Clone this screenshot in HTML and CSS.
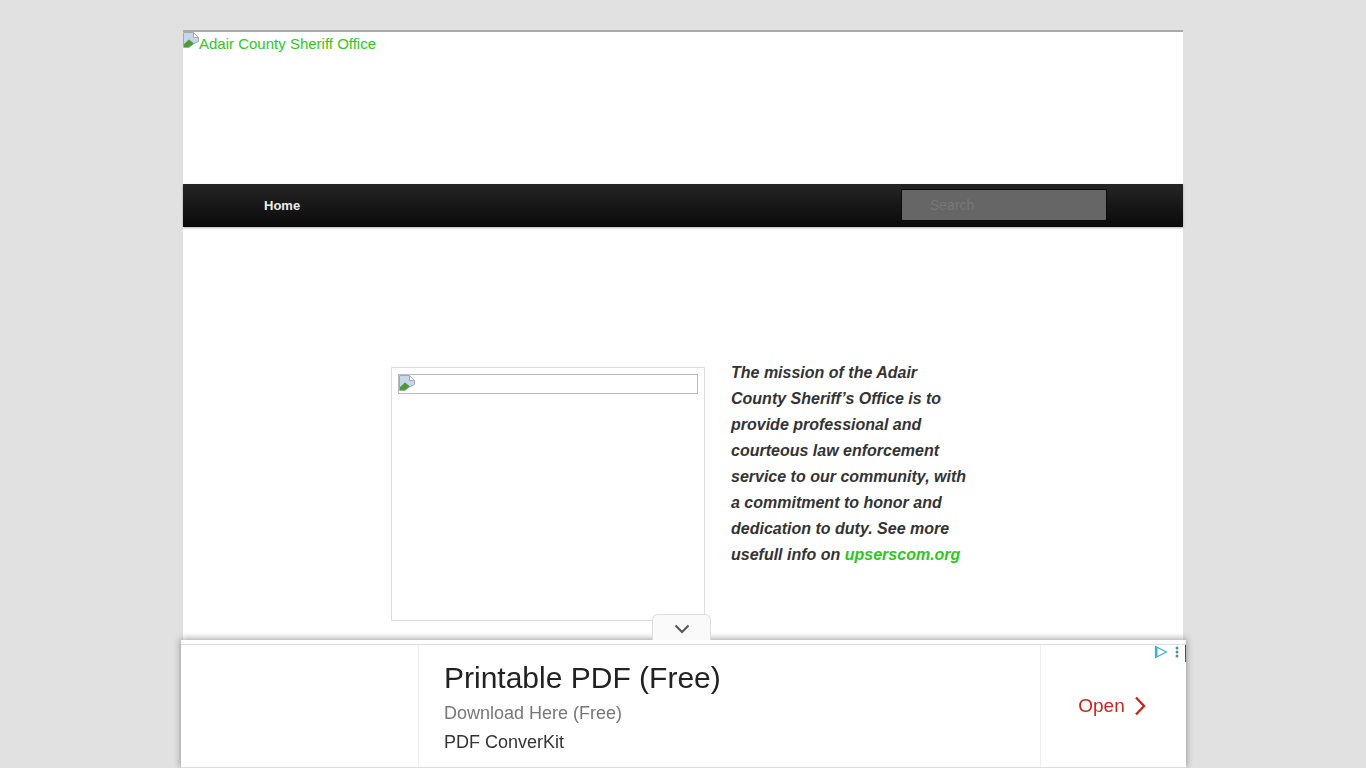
FILE: index.html

```html
<!DOCTYPE html>
<html lang="en">
<head>
  <meta charset="UTF-8">
  <meta name="viewport" content="width=device-width, initial-scale=1">
  <title>Adair County Sheriff Office</title>
  <link rel="stylesheet" href="styles.css">
</head>
<body>

<div id="page">
  <header class="site-header">
    <a class="logo-link" href="#">
      <svg class="broken-img" width="16" height="16" viewBox="0 0 16 16"><path d="M.5.500h10l5 5v4L10 12l-4 3.500H.5z" fill="#c9d5e9" stroke="#a3a9b3"/><path d="M10.500.500v5h5z" fill="#fff" stroke="#a3a9b3"/><path d="M1 15v-3L6 7.500l5 4L6 15z" fill="#4c9a38"/></svg>Adair County Sheriff Office
    </a>
  </header>

  <nav class="main-nav">
    <a class="nav-home" href="#">Home</a>
    <input class="search" type="text" placeholder="Search">
  </nav>

  <main class="content">
    <div class="photo-frame">
      <div class="photo-broken">
        <svg class="broken-img" width="16" height="16" viewBox="0 0 16 16"><path d="M.5.500h10l5 5v4L10 12l-4 3.500H.5z" fill="#c9d5e9" stroke="#a3a9b3"/><path d="M10.500.500v5h5z" fill="#fff" stroke="#a3a9b3"/><path d="M1 15v-3L6 7.500l5 4L6 15z" fill="#4c9a38"/></svg>
      </div>
    </div>
    <p class="mission">The mission of the Adair County Sheriff’s Office is to provide professional and courteous law enforcement service to our community, with a commitment to honor and dedication to duty. See more usefull info on <a href="#">upserscom.org</a></p>
  </main>
</div>

<div class="ad-bar">
  <button class="ad-toggle" type="button">
    <svg width="16" height="10" viewBox="0 0 16 10"><path d="M1.500 1.500L8 8l6.500-6.500" fill="none" stroke="#555" stroke-width="2"/></svg>
  </button>
  <div class="ad-body">
    <div class="ad-thumb"></div>
    <div class="ad-text">
      <div class="ad-title">Printable PDF (Free)</div>
      <div class="ad-sub">Download Here (Free)</div>
      <div class="ad-brand">PDF ConverKit</div>
    </div>
    <div class="ad-action">
      <span>Open</span>
      <svg width="12" height="20" viewBox="0 0 12 20"><path d="M2 1.500L10 10l-8 8.500" fill="none" stroke="#c5281f" stroke-width="2.400"/></svg>
    </div>
    <div class="ad-marks">
      <svg width="14" height="14" viewBox="0 0 14 14"><path d="M1.500 1.500v11l11-5.500z" fill="none" stroke="#3fb2d0" stroke-width="1.300"/><path d="M1.500 1.500v11l2-1v-9z" fill="#3fb2d0"/></svg>
      <svg width="4" height="14" viewBox="0 0 4 14"><circle cx="2" cy="3" r="1.500" fill="#4a90a4"/><circle cx="2" cy="7" r="1.500" fill="#4a90a4"/><circle cx="2" cy="11" r="1.500" fill="#4a90a4"/></svg>
    </div>
  </div>
  <div class="ad-edge"></div>
</div>

</body>
</html>
```

FILE: styles.css

```css
html, body { height: 100%; }
body {
  margin: 0;
  background: #e1e1e1;
  font-family: "Liberation Sans", Arial, sans-serif;
  color: #333;
  overflow: hidden;
}
a { color: #2fc71f; text-decoration: none; }

#page {
  width: 1000px;
  margin: 30px 0 0 183px;
  background: #fff;
  border-top: 2px solid #aaa;
  height: 736px;
}

.site-header { height: 152px; }
.logo-link { display: block; font-size: 15px; line-height: 24px; }
.broken-img { display: inline-block; vertical-align: top; }

.main-nav {
  height: 43px;
  display: flex;
  align-items: center;
  justify-content: space-between;
  padding: 0 76px 0 81px;
  background: linear-gradient(#252525, #0a0a0a);
  box-shadow: 0 1px 2px rgba(0, 0, 0, .3);
}
.nav-home { color: #eee; font-size: 13px; font-weight: bold; }
.search {
  box-sizing: border-box;
  width: 206px;
  height: 32px;
  margin: -1px 0 0;
  padding: 0 0 0 28px;
  background: #666;
  border: 1px solid #0a0a0a;
  border-radius: 2px;
  font-family: inherit;
  font-size: 14px;
}
.search::placeholder { color: #777; opacity: 1; }

.content {
  display: flex;
  align-items: flex-start;
  gap: 26px;
  padding: 140px 0 0 208px;
}
.photo-frame {
  box-sizing: border-box;
  width: 314px;
  height: 254px;
  padding: 6px;
  border: 1px solid #ddd;
  flex: none;
}
.photo-broken {
  box-sizing: border-box;
  height: 20px;
  border: 1px solid #bbb;
}
.mission {
  width: 240px;
  margin: -7px 0 0;
  font-size: 16px;
  font-style: italic;
  font-weight: bold;
  line-height: 26px;
}

.ad-bar {
  position: fixed;
  left: 181px;
  bottom: 0;
  width: 1005px;
  height: 128px;
  background: #fff;
  box-shadow: 0 -1px 7px rgba(0, 0, 0, .4);
}
.ad-toggle {
  position: absolute;
  top: -26px;
  left: 471px;
  width: 59px;
  height: 26px;
  padding: 4px 0 0;
  background: #fafafa;
  border: 1px solid #ddd;
  border-bottom: 0;
  border-radius: 6px 6px 0 0;
}
.ad-body {
  box-sizing: border-box;
  display: flex;
  height: 124px;
  margin-top: 4px;
  border-top: 1px solid #ddd;
  border-bottom: 1px solid #ddd;
}
.ad-thumb { width: 237px; border-right: 1px solid #eee; flex: none; }
.ad-text {
  width: 622px;
  padding-left: 25px;
  box-sizing: border-box;
  border-right: 1px solid #eee;
  flex: none;
}
.ad-title { margin-top: 14px; font-size: 30px; line-height: 38px; color: #222; }
.ad-sub { margin-top: 2px; font-size: 18px; line-height: 28px; color: #777; }
.ad-brand { font-size: 18px; line-height: 30px; color: #333; }
.ad-action {
  flex: 1;
  display: flex;
  align-items: center;
  justify-content: center;
  gap: 9px;
  padding-right: 3px;
  color: #c5281f;
  font-size: 19px;
}
.ad-marks {
  position: absolute;
  top: 5px;
  right: 7px;
  display: flex;
  gap: 7px;
}
.ad-edge {
  position: absolute;
  top: 5px;
  right: 0;
  width: 1px;
  height: 17px;
  background: #555;
}
```
